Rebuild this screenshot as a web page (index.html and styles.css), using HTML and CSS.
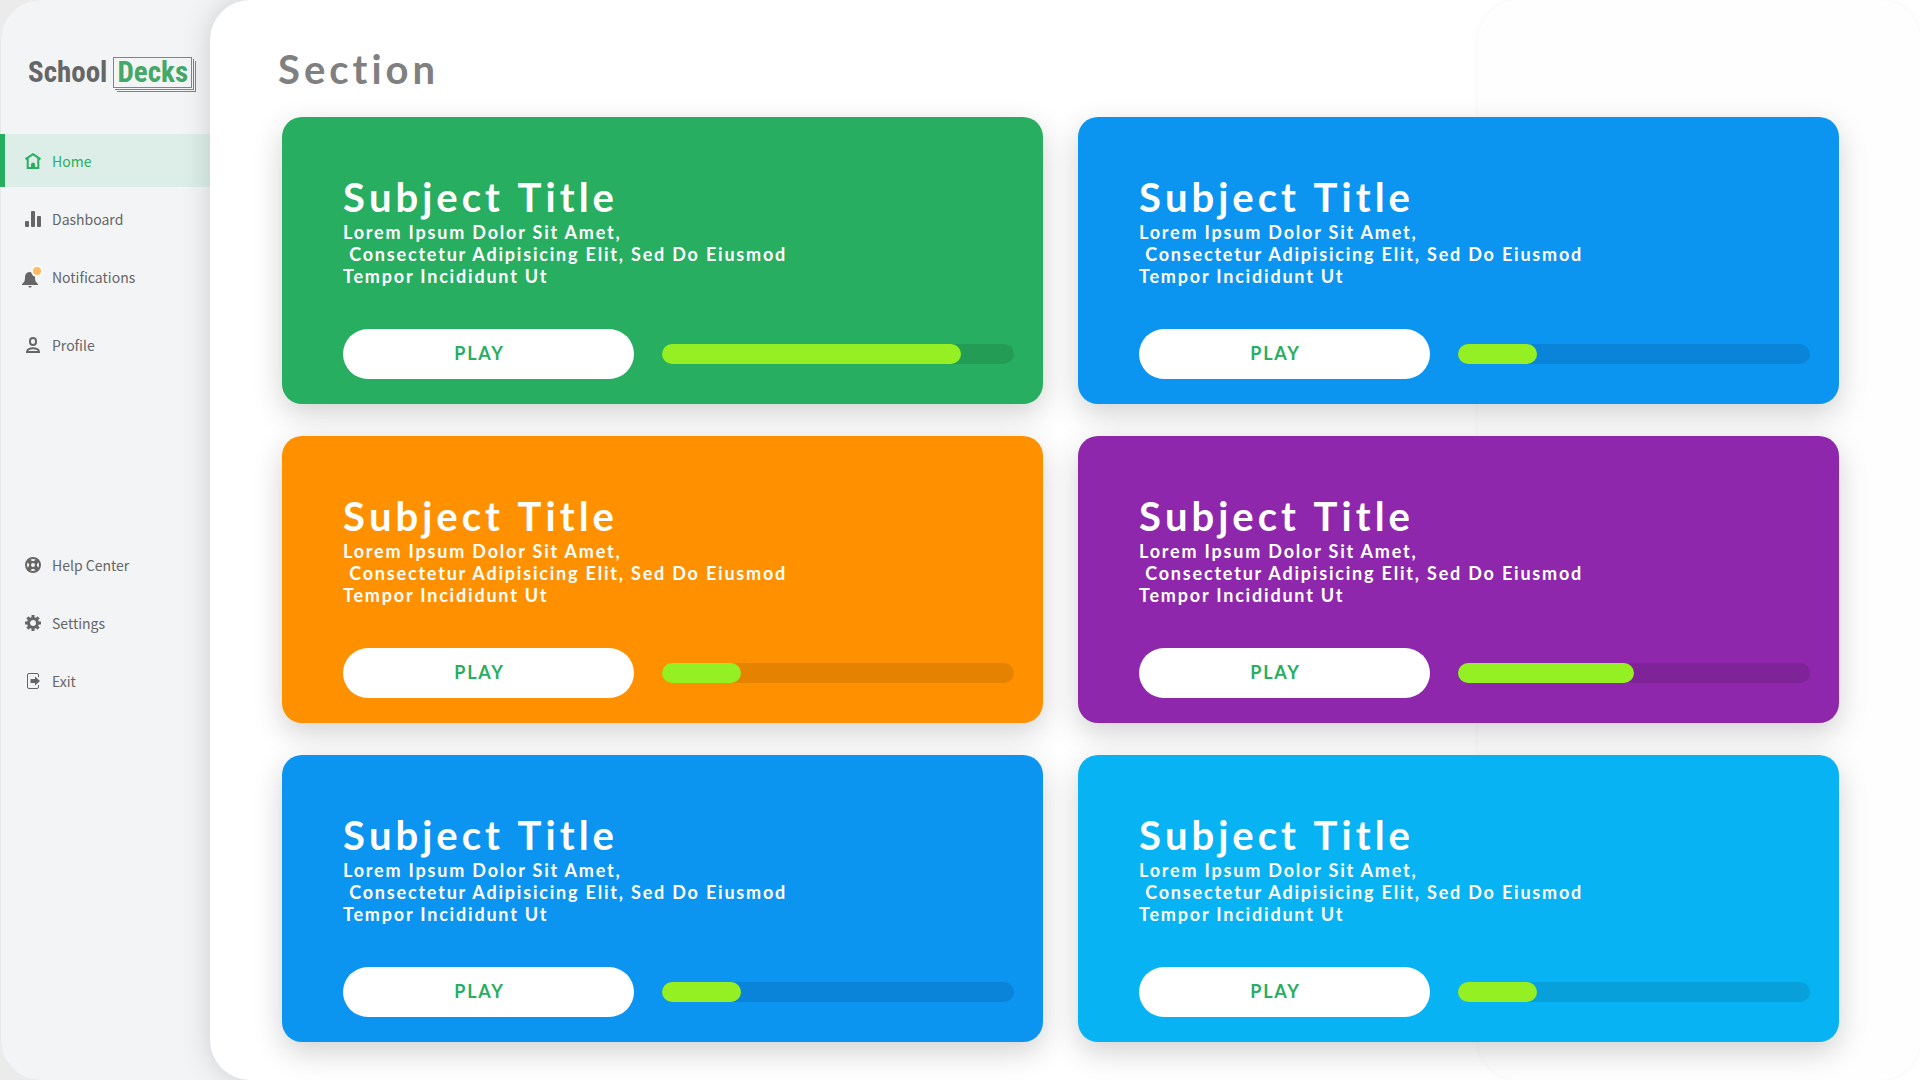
FILE: index.html
```html
<!doctype html>
<html lang="en">

<head>
  <meta charset="utf-8">
  <meta name="viewport" content="width=device-width, initial-scale=1.0">
  <title>School Decks</title>
  <link rel="stylesheet" href="styles.css">
</head>

<body>
  <div class="app">
    <aside class="sidebar">
      <a class="logo" href="#">
        <span class="logo-school">School</span>
        <span class="logo-decks">Decks</span>
      </a>

      <nav class="menu">
        <a class="menu-item active" href="#">
          <svg class="icon" viewBox="0 0 16 16" fill="none" stroke="currentColor" stroke-width="2">
            <path d="M.5 6.200 8 1.200l7.500 5M2.700 5v10h10.600V5" />
            <path d="M6 15v-3.500a2 2 0 0 1 4 0V15z" fill="currentColor" stroke="none" />
          </svg>
          Home
        </a>
        <a class="menu-item" href="#">
          <svg class="icon" viewBox="0 0 16 16" fill="currentColor">
            <rect x="0" y="10" width="4" height="6" rx="1" />
            <rect x="6" y="0" width="4" height="16" rx="1" />
            <rect x="12" y="5" width="4" height="11" rx="1" />
          </svg>
          Dashboard
        </a>
        <a class="menu-item notifications" href="#">
          <svg class="icon bell" viewBox="0 0 20 22">
            <path d="M8 6c-4 0-5 3-5 6 0 3-1 4-3 6v1h16v-1c-2-2-3-3-3-6 0-3-1-6-5-6zM6 20h4l-2 2z" fill="#666" />
            <circle cx="15" cy="5" r="6" fill="#fcfaf5" />
            <circle cx="15" cy="5" r="4" fill="#fdbc64" />
          </svg>
          Notifications
        </a>
        <a class="menu-item" href="#">
          <svg class="icon" viewBox="0 0 16 16" fill="none" stroke="currentColor" stroke-width="2">
            <rect x="5" y="1" width="6" height="7" rx="3" />
            <path d="M2 15c0-5 12-5 12 0z" />
          </svg>
          Profile
        </a>
      </nav>

      <nav class="menu">
        <a class="menu-item" href="#">
          <svg class="icon" viewBox="0 0 16 16" fill="none" stroke="currentColor">
            <circle cx="8" cy="8" r="7" stroke-width="2" />
            <circle cx="8" cy="8" r="3" stroke-width="2" />
            <path d="M3 3l3 3M13 3l-3 3M3 13l3-3M13 13l-3-3" stroke-width="4" />
          </svg>
          Help Center
        </a>
        <a class="menu-item" href="#">
          <svg class="icon" viewBox="0 0 16 16" fill="none" stroke="currentColor">
            <circle cx="8" cy="8" r="4.500" stroke-width="3" />
            <path d="M8 0v3M8 13v3M0 8h3M13 8h3M2.400 2.400l2 2M11.600 11.600l2 2M2.400 13.600l2-2M11.600 4.400l2-2" stroke-width="3" />
          </svg>
          Settings
        </a>
        <a class="menu-item" href="#">
          <svg class="icon" viewBox="0 0 16 16" fill="none" stroke="currentColor">
            <path d="M13.500 4V2a1.500 1.500 0 0 0-1.500-1.500H4A1.500 1.500 0 0 0 2.500 2v12A1.500 1.500 0 0 0 4 15.500h8a1.500 1.500 0 0 0 1.500-1.500v-2" />
            <path d="M5.500 6H10V3.500L15 8l-5 4.500V10H5.500z" fill="currentColor" stroke="none" />
          </svg>
          Exit
        </a>
      </nav>
    </aside>

    <main class="content">
      <div class="backdrop"></div>
      <h1>Section</h1>
      <div class="cards">
        <section class="card green">
          <h2>Subject Title</h2>
          <p>Lorem Ipsum Dolor Sit Amet,
 Consectetur Adipisicing Elit, Sed Do Eiusmod
Tempor Incididunt Ut</p>
          <div class="card-footer">
            <button class="play">PLAY</button>
            <div class="progress"><div class="bar" style="width: 85%"></div></div>
          </div>
        </section>

        <section class="card blue">
          <h2>Subject Title</h2>
          <p>Lorem Ipsum Dolor Sit Amet,
 Consectetur Adipisicing Elit, Sed Do Eiusmod
Tempor Incididunt Ut</p>
          <div class="card-footer">
            <button class="play">PLAY</button>
            <div class="progress"><div class="bar" style="width: 22.5%"></div></div>
          </div>
        </section>

        <section class="card orange">
          <h2>Subject Title</h2>
          <p>Lorem Ipsum Dolor Sit Amet,
 Consectetur Adipisicing Elit, Sed Do Eiusmod
Tempor Incididunt Ut</p>
          <div class="card-footer">
            <button class="play">PLAY</button>
            <div class="progress"><div class="bar" style="width: 22.5%"></div></div>
          </div>
        </section>

        <section class="card purple">
          <h2>Subject Title</h2>
          <p>Lorem Ipsum Dolor Sit Amet,
 Consectetur Adipisicing Elit, Sed Do Eiusmod
Tempor Incididunt Ut</p>
          <div class="card-footer">
            <button class="play">PLAY</button>
            <div class="progress"><div class="bar" style="width: 50%"></div></div>
          </div>
        </section>

        <section class="card blue">
          <h2>Subject Title</h2>
          <p>Lorem Ipsum Dolor Sit Amet,
 Consectetur Adipisicing Elit, Sed Do Eiusmod
Tempor Incididunt Ut</p>
          <div class="card-footer">
            <button class="play">PLAY</button>
            <div class="progress"><div class="bar" style="width: 22.5%"></div></div>
          </div>
        </section>

        <section class="card sky">
          <h2>Subject Title</h2>
          <p>Lorem Ipsum Dolor Sit Amet,
 Consectetur Adipisicing Elit, Sed Do Eiusmod
Tempor Incididunt Ut</p>
          <div class="card-footer">
            <button class="play">PLAY</button>
            <div class="progress"><div class="bar" style="width: 22.5%"></div></div>
          </div>
        </section>
      </div>
    </main>
  </div>
</body>

</html>
```
FILE: styles.css
```css
* {
  margin: 0;
  padding: 0;
  box-sizing: border-box;
}

body {
  font-family: Lato, sans-serif;
  background: #ebebeb;
}

.app {
  display: flex;
  min-height: 100vh;
  background: #f3f4f6;
  border-radius: 40px 0 0 40px;
  box-shadow: inset 1px 0 #e8e8ea;
}

/* sidebar */
.sidebar {
  width: 210px;
  flex-shrink: 0;
}

.logo {
  display: flex;
  align-items: center;
  gap: 6px;
  height: 134px;
  padding: 10px 0 0 28px;
  font: bold 29px "Roboto Condensed", "Liberation Sans Narrow", "Liberation Sans", sans-serif;
  text-decoration: none;
}

.logo-school {
  color: #666;
}

.logo-decks {
  height: 31px;
  padding: 0 3px;
  line-height: 29px;
  color: #44a868;
  background: #f3f4f6;
  border: 1px solid #44a868;
  box-shadow: 1px 1px #f3f4f6, 2px 2px #44a868, 3px 3px #f3f4f6, 4px 4px #44a868;
}

.menu {
  margin-bottom: 167px;
}

.menu-item {
  display: flex;
  align-items: center;
  gap: 11px;
  height: 53px;
  margin-bottom: 5px;
  padding-left: 25px;
  font: 14px/20px "Noto Sans CJK JP", sans-serif;
  color: #666;
  text-decoration: none;
}

.menu-item.active {
  padding-left: 20px;
  border-left: 5px solid #28ae60;
  background: #ddeee8;
  color: #28ae60;
}

.icon {
  width: 16px;
  height: 16px;
}

.notifications {
  gap: 10px;
  padding-left: 22px;
  margin-bottom: 15px;
}

.bell {
  width: 20px;
  height: 22px;
  overflow: visible;
}

/* content */
.content {
  position: relative;
  flex: 1;
  padding: 40px 81px 38px 72px;
  background: #fff;
  border-radius: 40px 0 0 40px;
  box-shadow: 0 0 30px rgba(0, 0, 0, 0.16);
}

.backdrop {
  position: absolute;
  top: 0;
  right: 0;
  bottom: 0;
  width: 442px;
  background: #fefefe;
  border-radius: 40px;
  box-shadow: 0 0 6px rgba(0, 0, 0, 0.04);
}

h1 {
  position: relative;
  margin: 0 0 18px -4px;
  font-size: 40px;
  line-height: 59px;
  letter-spacing: 0.1em;
  color: #808080;
}

.cards {
  position: relative;
  display: grid;
  grid-template-columns: 1fr 1fr;
  gap: 32px 35px;
}

.card {
  padding: 56px 29px 25px 61px;
  border-radius: 20px;
  color: #fff;
  box-shadow: 0 10px 30px rgba(0, 0, 0, 0.18);
}

.card h2 {
  font-size: 40px;
  line-height: 48px;
  letter-spacing: 0.1em;
  font-kerning: none;
}

.card p {
  margin-bottom: 42px;
  font-size: 18px;
  font-weight: bold;
  line-height: 22px;
  letter-spacing: 0.1em;
  white-space: pre;
}

.card-footer {
  display: grid;
  grid-template-columns: 291fr 352fr;
  align-items: center;
  gap: 28px;
}

.play {
  height: 50px;
  padding: 0 18px 2px 0;
  border: none;
  border-radius: 25px;
  background: #fff;
  color: #28ae60;
  font: bold 18px Lato, sans-serif;
  letter-spacing: 0.1em;
}

.progress {
  height: 20px;
  border-radius: 10px;
  background: rgba(0, 0, 0, 0.1);
}

.bar {
  height: 100%;
  border-radius: 10px;
  background: #94f022;
}

.green {
  background: #28ae60;
}

.blue {
  background: #0c94f1;
}

.orange {
  background: #ff9100;
}

.purple {
  background: #8e27ab;
}

.sky {
  background: #08b3f4;
}
```
